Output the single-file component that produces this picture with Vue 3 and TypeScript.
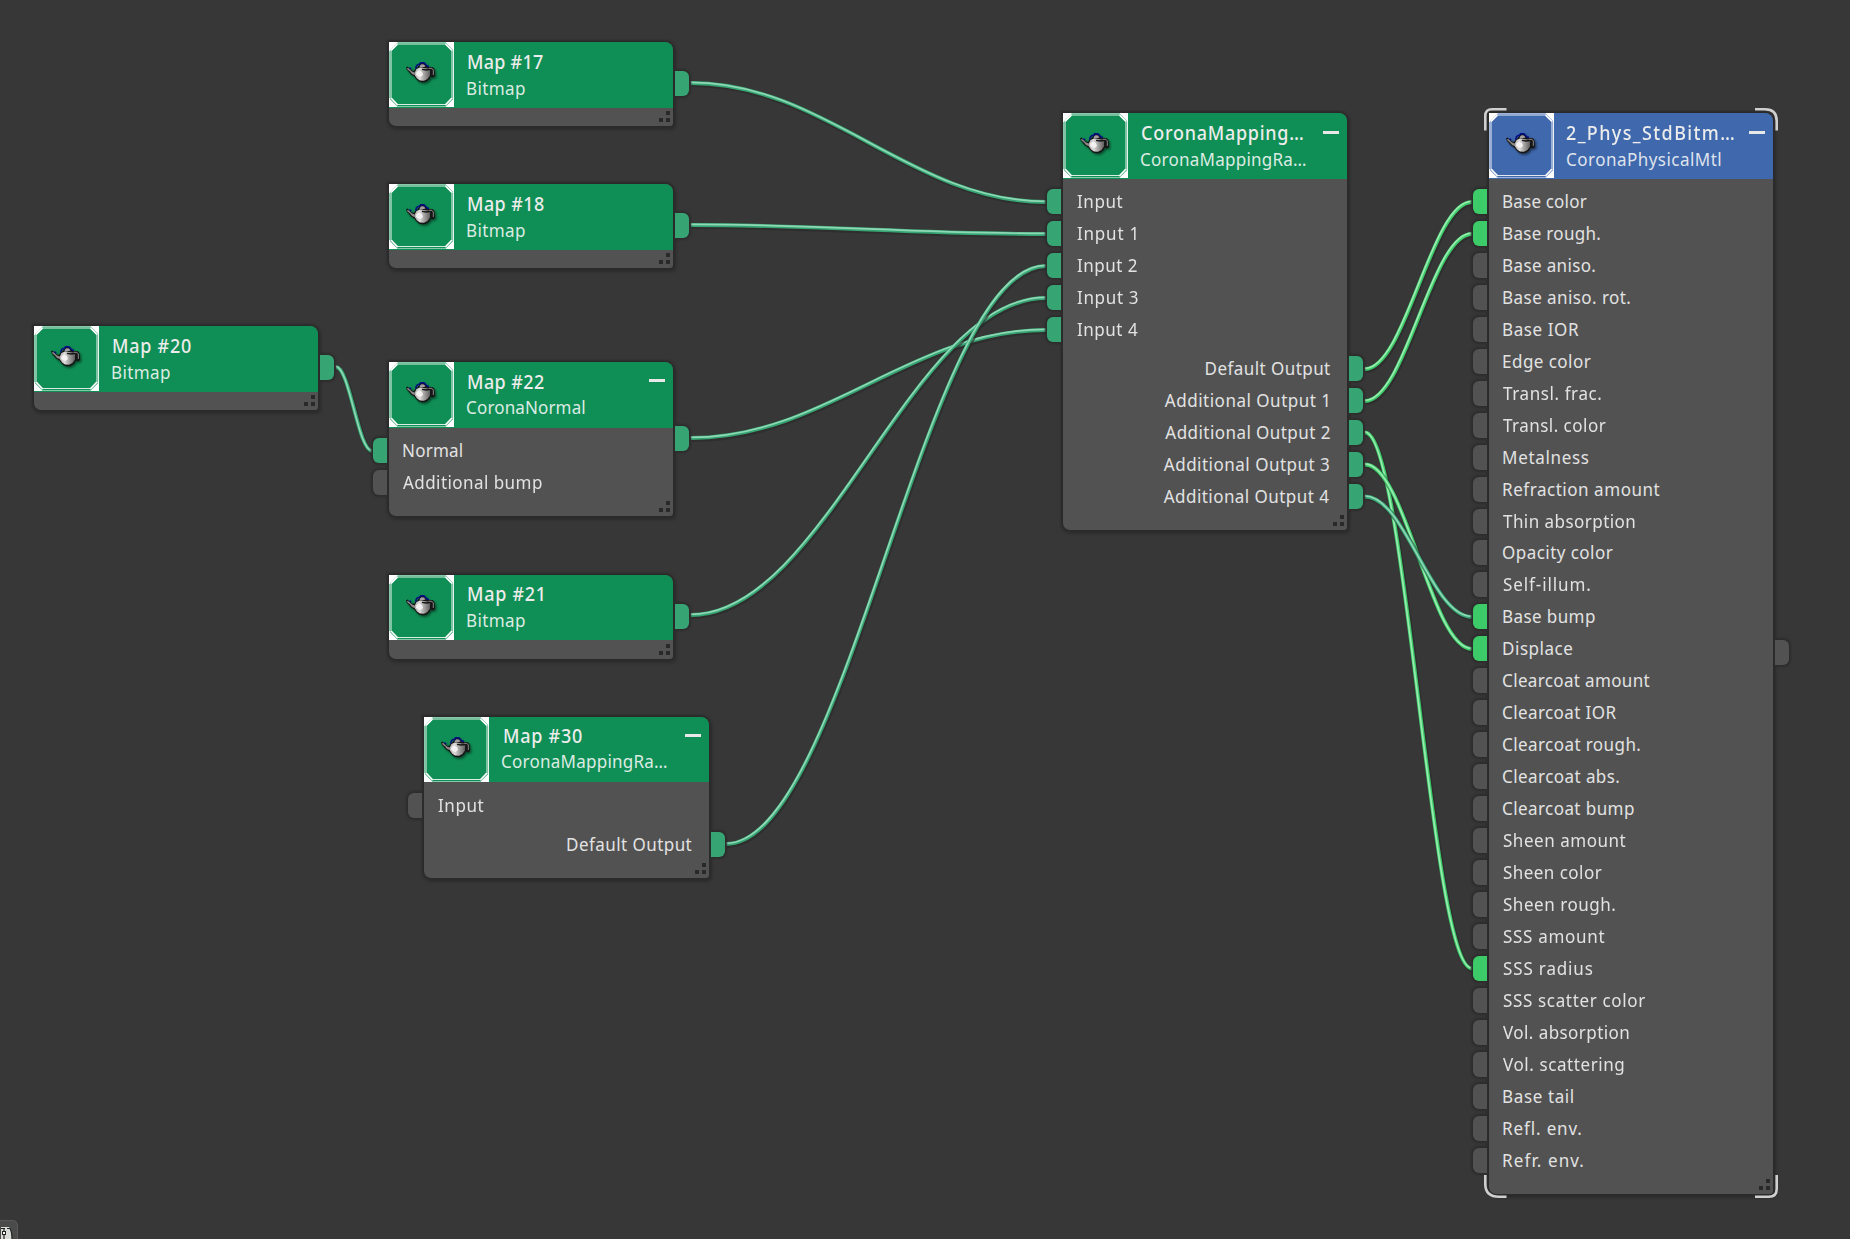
<script setup lang="ts">
interface Label { text: string; w: number; kind?: 'teal' | 'lime' | 'idle'; dx?: number }
interface GraphNode {
  x: number; y: number; w: number; h: number; blue?: boolean; selected?: boolean; collapse?: number
  title: Label; titleX: number; sub: Label; subY: number
  inputs: Label[]; outputs: Label[]; sidePort?: number; sideKind?: string; pitch?: number
}

const bitmap = (x: number, y: number, name: string, w: number): GraphNode => ({
  x, y, w: 284, h: 84, title: { text: name, w }, titleX: 78.5, sub: { text: 'Bitmap', w: 58 }, subY: 0,
  inputs: [], outputs: [], sidePort: 29, sideKind: 'teal',
})

const idle = (text: string, w: number): Label => ({ text, w, kind: 'idle' })
const teal = (text: string, w: number, dx = 0): Label => ({ text, w, kind: 'teal', dx })
const lime = (text: string, w: number): Label => ({ text, w, kind: 'lime' })

const nodes: GraphNode[] = [
  bitmap(389, 42, 'Map #17', 75),
  bitmap(389, 184, 'Map #18', 76),
  bitmap(34, 326, 'Map #20', 78),
  {
    x: 389, y: 362, w: 284, h: 154, collapse: 17, title: { text: 'Map #22', w: 76 }, titleX: 78.5,
    sub: { text: 'CoronaNormal', w: 118 }, subY: -1,
    inputs: [teal('Normal', 59.5), idle('Additional bump', 139)], outputs: [], sidePort: 63.5, sideKind: 'teal',
  },
  bitmap(389, 574.5, 'Map #21', 75),
  {
    x: 424, y: 716.5, w: 285, h: 161, collapse: 17, title: { text: 'Map #30', w: 78 }, titleX: 79.5,
    sub: { text: 'CoronaMappingRa…', w: 165 }, subY: -1,
    inputs: [idle('Input', 46)], outputs: [teal('Default Output', 125)],
  },
  {
    x: 1063, y: 113, w: 284, h: 417, collapse: 17.5, title: { text: 'CoronaMapping…', w: 161 }, titleX: 79,
    sub: { text: 'CoronaMappingRa…', w: 165 }, subY: 0,
    inputs: [teal('Input', 46), teal('Input 1', 59), teal('Input 2', 60), teal('Input 3', 61), teal('Input 4', 61)],
    outputs: [teal('Default Output', 125, 0.5), teal('Additional Output 1', 163, -2.5), teal('Additional Output 2', 164.5),
      teal('Additional Output 3', 165.5, -0.7), teal('Additional Output 4', 165.5, -0.7)],
  },
  {
    x: 1489, y: 113, w: 284, h: 1081, blue: true, selected: true, collapse: 17.5, pitch: 31.955,
    title: { text: '2_Phys_StdBitm…', w: 168 }, titleX: 77, sub: { text: 'CoronaPhysicalMtl', w: 154 }, subY: 0,
    sidePort: 527, sideKind: 'idle', outputs: [],
    inputs: [
      lime('Base color', 84), lime('Base rough.', 97), idle('Base aniso.', 92), idle('Base aniso. rot.', 127),
      idle('Base IOR', 76), idle('Edge color', 88), idle('Transl. frac.', 98), idle('Transl. color', 103),
      idle('Metalness', 86), idle('Refraction amount', 157), idle('Thin absorption', 131.5), idle('Opacity color', 110),
      idle('Self-illum.', 87), lime('Base bump', 92), lime('Displace', 69.5), idle('Clearcoat amount', 147),
      idle('Clearcoat IOR', 113.5), idle('Clearcoat rough.', 137), idle('Clearcoat abs.', 116), idle('Clearcoat bump', 131),
      idle('Sheen amount', 123), idle('Sheen color', 99), idle('Sheen rough.', 112), idle('SSS amount', 102),
      lime('SSS radius', 90), idle('SSS scatter color', 142.5), idle('Vol. absorption', 125.5), idle('Vol. scattering', 120.5),
      idle('Base tail', 70.5), idle('Refl. env.', 78), idle('Refr. env.', 80),
    ],
  },
]

// Tracks each label out to its column width after narrowing the glyphs.
const SQUEEZE = 0.92
const ctx = document.createElement('canvas').getContext('2d')!
function fit(l: Label, font: string, right = false) {
  ctx.font = font
  const m = ctx.measureText(l.text)
  const ink = m.actualBoundingBoxLeft + m.actualBoundingBoxRight
  const gap = (l.w / SQUEEZE - ink) / (l.text.length - 1)
  const side = right ? gap + (m.width - m.actualBoundingBoxRight) : m.actualBoundingBoxLeft
  return {
    letterSpacing: `${gap}px`,
    transform: `translateX(${side * SQUEEZE + (l.dx ?? 0)}px) scaleX(${SQUEEZE})`,
  }
}
const LABEL = '400 18.5px "Noto Sans"'
const TITLE = '500 19.5px "Noto Sans"'

const wires: { a: [number, number]; b: [number, number]; c: 'teal' | 'lime' }[] = [
  { a: [691, 83], b: [1046, 202], c: 'teal' },
  { a: [691, 225], b: [1046, 234], c: 'teal' },
  { a: [336, 367], b: [372, 451], c: 'teal' },
  { a: [691, 438], b: [1046, 330], c: 'teal' },
  { a: [691, 615], b: [1046, 298], c: 'teal' },
  { a: [726, 844], b: [1046, 266], c: 'teal' },
  { a: [1365, 369], b: [1472, 202], c: 'lime' },
  { a: [1365, 401], b: [1472, 234], c: 'lime' },
  { a: [1365, 432.5], b: [1472, 968.5], c: 'lime' },
  { a: [1365, 464.5], b: [1472, 649], c: 'lime' },
  { a: [1365, 496.5], b: [1472, 617], c: 'teal' },
]
function curve(a: [number, number], b: [number, number]) {
  const d = (b[0] - a[0]) * 0.38
  return `M${a[0]} ${a[1]}C${a[0] + d} ${a[1]} ${b[0] - d} ${b[1]} ${b[0]} ${b[1]}`
}
</script>

<template>
  <main class="canvas">
    <svg class="wires" width="1850" height="1239">
      <g v-for="(w, i) in wires" :key="i" fill="none" :class="w.c">
        <path class="shade" :d="curve(w.a, w.b)" transform="translate(1 1.5)" />
        <path class="core" :d="curve(w.a, w.b)" />
        <path class="shine" :d="curve(w.a, w.b)" transform="translate(-.4 -.6)" />
      </g>
    </svg>

    <section
      v-for="n in nodes" :key="n.title.text" class="node" :class="{ blue: n.blue }"
      :style="{ left: n.x + 'px', top: n.y + 'px', width: n.w + 'px', height: n.h + 'px' }"
    >
      <header>
        <svg class="thumb" width="65" height="65" viewBox="0 0 65 65">
          <path fill="#fff" d="M0 0H9L0 9ZM56 0H65V9ZM0 56V65H9ZM65 56V65H56Z" />
          <path fill="none" stroke="#fff" stroke-opacity=".9" d="M.5 0V9M.5 56V65M64.5 0V65" />
          <path fill="none" stroke="#fff" stroke-opacity=".5" d="M.5 9V56M9 .5H56M9 64.5H56" />
          <path fill="none" stroke="#fff" stroke-opacity=".85" stroke-width="1.1" d="M8.5 2H56.5L63 8.5V56L56.5 62.5H8.5L2 56V8.5Z" />
          <path fill="#fff" d="M0 0H9L0 9ZM1 8.5L8.5 1V3L3 8.5ZM64 8.5L56.5 1V3L62 8.5ZM1 56L8.5 64V62L3 56ZM64 56L56.5 64V62L62 56Z" />
          <use href="#teapot" x="17" y="20" />
        </svg>
        <div class="names">
          <div class="title"><span :style="[fit(n.title, TITLE), { marginLeft: n.titleX - 65 + 'px' }]">{{ n.title.text }}</span></div>
          <div class="sub" :style="{ marginTop: n.subY + 'px' }"><span :style="fit(n.sub, LABEL)">{{ n.sub.text }}</span></div>
        </div>
        <i v-if="n.collapse" class="minus" :style="{ marginTop: n.collapse + 'px' }" />
      </header>
      <div v-if="n.inputs.length" class="rows">
        <div v-for="r in n.inputs" :key="r.text" class="row" :style="{ height: (n.pitch ?? 32) + 'px' }">
          <i class="port in" :class="r.kind" />
          <span class="label" :style="fit(r, LABEL)">{{ r.text }}</span>
        </div>
      </div>
      <div v-if="n.outputs.length" class="rows outs">
        <div v-for="r in n.outputs" :key="r.text" class="row">
          <span class="label" :style="fit(r, LABEL, true)">{{ r.text }}</span>
          <i class="port out" :class="r.kind" />
        </div>
      </div>
      <i v-if="n.sidePort" class="port out" :class="n.sideKind" :style="{ top: n.sidePort + 'px' }" />
      <svg class="grip" width="11" height="11"><path fill="#292929" d="M7 0h4v4H7zM0 7h4v4H0zM7 7h4v4H7z" /></svg>
      <svg v-if="n.selected" class="brackets" width="294" height="1091" fill="none" stroke="#cfcfcf" stroke-width="2.6">
        <path d="M1.3 22.5V8Q1.3 1.3 8 1.3H22.5M271 1.3H281Q292.7 1.3 292.7 13V22.5M1.3 1067V1076Q1.3 1088.7 15 1088.7H22.5M271 1088.7H285Q292.7 1088.7 292.7 1081V1067" />
      </svg>
    </section>

    <div class="corner">
      <svg width="12" height="13" viewBox="0 0 12 13">
        <path fill="#d9ddd9" d="M0 0H8Q11 3 11 13H0Z" />
        <path fill="none" stroke="#202420" stroke-width="1.2" d="M0 1.5H4M6 1.5H9Q11 5 11 13M3 1V5M3 8V13" />
        <rect x="1.5" y="4.5" width="3" height="3" fill="#fff" stroke="#202420" />
      </svg>
    </div>

    <svg class="defs" width="0" height="0">
      <defs>
        <filter id="pot-shadow" x="-20%" y="-20%" width="150%" height="160%"><feDropShadow dx="1.5" dy="1.6" stdDeviation="1" flood-opacity=".5" /></filter>
        <linearGradient id="pot-metal" x1="0" x2="1"><stop offset="0" stop-color="#b5b2b2" /><stop offset=".3" stop-color="#dedbdb" /><stop offset=".6" stop-color="#a5a2a2" /><stop offset="1" stop-color="#5c5a5a" /></linearGradient>
        <g id="teapot" filter="url(#pot-shadow)">
          <path fill="#141414" d="M0 5.5L1.5 4.5L3.5 6.5L6 8.5L8 9L9.5 6.5L11.5 5L13 3.5L14 1H18.500L20 3L22 5H26.500L28.500 7L29 14L27 15.500L25 14.500L23.500 17L20.500 19.500L17 20.500L13 19.500L10.500 17.500L8.500 14.500L5 12.500L3 10L1 8Z" />
          <path fill="#8b8888" d="M1 6L2.500 6.200L6 9.500L9 10.500L9.500 13.500L6 12L4 9.500L1.500 7.500Z" />
          <path fill="url(#pot-metal)" d="M9 10L10.500 7L14 5.500L22 6.500L24.500 8.500L24 13.500L21.500 17L18 18.700L14 18.500L11 16.500L9 13.500Z" />
          <path fill="#f3f1f1" d="M10.500 10L13 8.500L16 10L17 13L14.500 15L12 14.500L10 12.500Z" />
          <path fill="#a3a0a0" d="M14 3.500L15.500 2.200L18 2.500L19.500 4.500L16 5.500H13.500Z" />
          <path fill="none" stroke="#141414" stroke-width="1.300" d="M16 7.300L20 8L24 7.500M25 8.500L24.500 13.500" />
          <path fill="none" stroke="#8a8888" stroke-width="1" d="M22.500 6.300H26L27.300 8V13" />
          <path fill="none" stroke="#060f86" stroke-width="1.500" d="M5 7L3.500 5.500M9.500 6.500L10.500 3.800L12 2.500H13.500L14.500 .8H18L19.500 2.500L21.500 4.200H23" />
        </g>
      </defs>
    </svg>
  </main>
</template>

<style>
body { background: #373737; overflow: hidden; }
</style>
<style scoped>
.canvas { position: relative; width: 100vw; height: 100vh; overflow: hidden; background: #373737; color: #e2e2e2; font: 400 18.5px "Noto Sans", sans-serif; }
.wires { position: absolute; inset: 0; }
.shade { stroke: #292929; stroke-opacity: .65; stroke-width: 5; }
.core { stroke-width: 3.8; }
.shine { stroke-width: 1.7; }
.teal .core { stroke: #36a573; }
.teal .shine { stroke: #8fd8b5; }
.lime .core { stroke: #3dca68; }
.lime .shine { stroke: #98ecb0; }
.node { position: absolute; display: flex; flex-direction: column; background: #525252; border-radius: 0 8px 3px 7px; box-shadow: 0 0 2px 2px #2b2b2b, 1px 2px 3px 2px #2e2e2e; }
header { display: flex; height: 65.500px; flex: none; background: #0f8f55; border-radius: 0 8px 0 0; }
.blue header { background: #3f68ad; }
.thumb { flex: none; }
.names { flex: 1; min-width: 0; white-space: nowrap; }
.names span { display: inline-block; transform-origin: 0 0; }
.title { height: 26px; margin-top: 6.500px; line-height: 26px; font-weight: 500; font-size: 19.500px; color: #ececec; }
.sub { height: 26px; line-height: 26px; color: #dcebe3; padding-left: 13px; }
.blue .sub { color: #dfe3ec; }
.minus { width: 16px; height: 3px; margin-right: 8.500px; background: #e8e8e8; flex: none; }
.rows { padding-top: 10.500px; }
.outs { padding-top: 7px; }
.row { position: relative; height: 32px; padding: 0 17px 0 14px; }
.label { display: block; width: max-content; line-height: 23.500px; white-space: nowrap; transform-origin: 0 0; }
.outs .label { margin-left: auto; transform-origin: 100% 0; }
.port { position: absolute; width: 14px; height: 25px; background: #525252; box-shadow: 0 0 2px 2px #2d2d2d; }
.port.in { left: -16px; top: 0; border-radius: 6px 0 0 6px; clip-path: inset(-5px 0 -5px -5px); }
.port.out { right: -16px; top: 0; border-radius: 0 6px 6px 0; clip-path: inset(-5px -5px -5px 0); }
.port.teal { background: #36a573; }
.port.lime { background: #3dca68; }
.grip { position: absolute; right: 3px; bottom: 4px; }
.brackets { position: absolute; left: -5px; top: -5px; }
.corner { position: absolute; left: -5px; bottom: -5px; width: 23px; height: 24px; padding: 6px 0 0 5px; box-sizing: border-box; background: #4b4b4b; border: 1px solid #595959; border-radius: 5px; }
.corner svg { display: block; }
.defs { position: absolute; }
</style>
